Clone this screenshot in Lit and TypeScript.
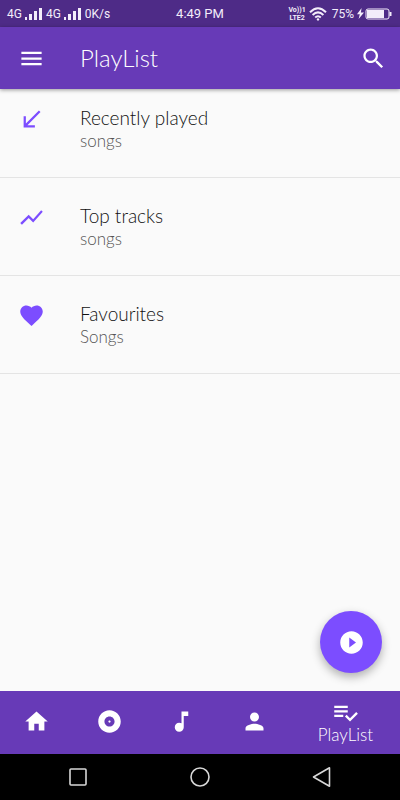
import { LitElement, html, svg, css } from "lit";
import { customElement, property } from "lit/decorators.js";

const ICONS: Record<string, string> = {
  menu: "M3 18h18v-2H3v2zm0-5h18v-2H3v2zm0-7v2h18V6H3z",
  search:
    "M15.5 14h-.79l-.28-.27C15.41 12.59 16 11.11 16 9.5 16 5.91 13.09 3 9.5 3S3 5.91 3 9.5 5.91 16 9.5 16c1.61 0 3.09-.59 4.23-1.57l.27.28v.79l5 4.99L20.49 19l-4.99-5zm-6 0C7.01 14 5 11.99 5 9.5S7.01 5 9.5 5 14 7.01 14 9.5 11.99 14 9.5 14z",
  received: "M20 5.41L18.59 4 7 15.59V9H5v10h10v-2H8.41z",
  chart: "M3.5 18.49l6-6.01 4 4L22 6.92l-1.41-1.41-7.09 7.97-4-4L2 16.99z",
  heart:
    "M12 21.35l-1.45-1.32C5.4 15.36 2 12.28 2 8.5 2 5.42 4.42 3 7.5 3c1.74 0 3.41.81 4.5 2.09C13.09 3.81 14.76 3 16.5 3 19.58 3 22 5.42 22 8.5c0 3.78-3.4 6.86-8.55 11.54L12 21.35z",
  play: "M12 2C6.48 2 2 6.48 2 12s4.48 10 10 10 10-4.48 10-10S17.52 2 12 2zm-2 14.5v-9l6 4.5-6 4.5z",
  home: "M10 20v-6h4v6h5v-8h3L12 3 2 12h3v8z",
  album:
    "M12 2C6.48 2 2 6.48 2 12s4.48 10 10 10 10-4.48 10-10S17.52 2 12 2zm0 14.5c-2.49 0-4.5-2.01-4.5-4.5S9.51 7.5 12 7.5s4.5 2.01 4.5 4.5-2.01 4.5-4.5 4.5zm0-5.5c-.55 0-1 .45-1 1s.45 1 1 1 1-.45 1-1-.45-1-1-1z",
  note: "M12 3v10.55c-.59-.34-1.27-.55-2-.55-2.21 0-4 1.79-4 4s1.79 4 4 4 4-1.79 4-4V7h4V3h-6z",
  person:
    "M12 12c2.21 0 4-1.79 4-4s-1.79-4-4-4-4 1.79-4 4 1.79 4 4 4zm0 2c-2.67 0-8 1.34-8 4v2h16v-2c0-2.66-5.33-4-8-4z",
  playlist:
    "M14 10H2v2h12v-2zm0-4H2v2h12V6zM2 16h8v-2H2v2zm19.5-4.5L23 13l-6.99 7-4.51-4.5L13 14l3.01 3 5.49-5.5z",
};

@customElement("md-icon")
export class MdIcon extends LitElement {
  @property() name = "";

  static styles = css`
    :host {
      display: block;
      flex: none;
      width: 27px;
      height: 27px;
    }
    .glyph {
      display: block;
      width: 100%;
      height: 100%;
      fill: currentColor;
    }
  `;

  render() {
    return html`<svg class="glyph" viewBox="0 0 24 24" aria-hidden="true">
      ${svg`<path d=${ICONS[this.name] ?? ""}></path>`}
    </svg>`;
  }
}

@customElement("status-bar")
export class StatusBar extends LitElement {
  static styles = css`
    :host {
      display: grid;
      grid-template-columns: 1fr auto 1fr;
      align-items: center;
      height: 27px;
      padding: 0 7px;
      background: #4e2b87;
      color: #f3edfa;
      font: 12px/16px Roboto, "Liberation Sans", sans-serif;
    }
    .side {
      display: flex;
      align-items: center;
      gap: 3px;
    }
    .end {
      justify-content: flex-end;
    }
    .clock {
      font-size: 13px;
    }
    .volte {
      display: grid;
      font-size: 7px;
      line-height: 8px;
      font-weight: 700;
      text-align: center;
    }
    .icon {
      display: block;
      flex: none;
    }
    .wifi {
      margin-right: 2px;
    }
    .power {
      display: flex;
      align-items: center;
      gap: 1px;
    }
  `;

  private signal() {
    return html`<svg class="icon" width="18" height="14" viewBox="0 0 18 14" fill="currentColor" aria-hidden="true">
      <path d="M0 10h2v3H0zM4 7h3v6H4zM9 4h3v9H9zM14 1h3v12h-3z"></path>
    </svg>`;
  }

  render() {
    return html`
      <div class="side">
        <span class="network">4G</span>${this.signal()}
        <span class="network">4G</span>${this.signal()}
        <span>0K/s</span>
      </div>
      <span class="clock">4:49 PM</span>
      <div class="side end">
        <span class="volte"><span>Vo))1</span><span>LTE2</span></span>
        <svg class="icon wifi" width="18" height="14" viewBox="0 0 18 14" fill="none" stroke="currentColor" stroke-width="2" aria-hidden="true">
          <path d="M1 5.2Q9-2.6 17 5.2M3.6 8Q9 2.8 14.4 8M6.2 10.6Q9 8 11.8 10.6"></path>
          <circle cx="9" cy="12.4" r="1.2" fill="currentColor" stroke="none"></circle>
        </svg>
        <span>75%</span>
        <span class="power">
          <svg class="icon" width="7" height="11" viewBox="0 0 7 11" fill="currentColor" aria-hidden="true">
            <path d="M4.6 0L0 6.2h2.8L1.6 11 7 4.4H3.9z"></path>
          </svg>
          <svg class="icon" width="28" height="12" viewBox="0 0 28 12" aria-hidden="true">
            <rect x="1" y="1" width="23" height="10" rx="2" fill="none" stroke="currentColor"></rect>
            <rect x="2" y="2" width="17" height="8" fill="currentColor"></rect>
            <path d="M25.5 4v4" stroke="currentColor" stroke-width="2"></path>
          </svg>
        </span>
      </div>
    `;
  }
}

@customElement("app-root")
export class AppRoot extends LitElement {
  static styles = css`
    :host {
      display: flex;
      flex-direction: column;
      min-height: 100vh;
      background: #fafafa;
      color: #111;
      font-family: Lato, "Open Sans", sans-serif;
      font-weight: 300;
    }
    button {
      border: 0;
      padding: 0;
      background: none;
      color: inherit;
      font: inherit;
      cursor: pointer;
    }
    .app-bar {
      display: flex;
      align-items: center;
      height: 62px;
      padding: 0 13px 0 18px;
      background: #673ab7;
      color: #fff;
      box-shadow: 0 1px 4px rgba(0, 0, 0, 0.4);
      z-index: 1;
    }
    .title {
      flex: 1;
      margin: 0 0 0 35px;
      font-size: 24px;
      line-height: 28px;
      font-weight: 300;
    }
    .content {
      position: relative;
      flex: 1;
    }
    .list {
      margin: -9px 0 0;
      padding: 0;
      list-style: none;
    }
    .row {
      display: flex;
      align-items: flex-start;
      gap: 35px;
      box-sizing: border-box;
      width: 100%;
      height: 98px;
      padding: 26px 18px;
      border-bottom: 1px solid #e4e4e4;
      text-align: left;
    }
    .row md-icon {
      color: #7c4dff;
    }
    .text {
      display: grid;
    }
    .name {
      font-size: 19px;
      line-height: 24px;
    }
    .detail {
      font-size: 17px;
      line-height: 22px;
      color: #555;
    }
    .fab {
      position: absolute;
      right: 18px;
      bottom: 18px;
      display: grid;
      place-items: center;
      width: 62px;
      height: 62px;
      border-radius: 50%;
      background: #7c4dff;
      color: #fff;
      box-shadow: 0 4px 10px rgba(0, 0, 0, 0.3);
    }
    .tabs {
      display: grid;
      grid-template-columns: repeat(4, 2fr) 3fr;
      height: 63px;
      background: #673ab7;
      color: #fff;
    }
    .tab {
      display: flex;
      flex-direction: column;
      align-items: center;
      justify-content: center;
      padding-bottom: 2px;
    }
    .tab-label {
      font-size: 17px;
      line-height: 18px;
    }
    .system {
      display: grid;
      grid-template-columns: repeat(3, 1fr);
      height: 46px;
      padding: 0 17px;
      background: #000;
      color: #d8d8d8;
    }
    .key {
      display: grid;
      place-items: center;
    }
    .key-icon {
      display: block;
      fill: none;
      stroke: currentColor;
      stroke-width: 1.6;
      stroke-linejoin: round;
    }
  `;

  private rows = [
    { icon: "received", name: "Recently played", detail: "songs" },
    { icon: "chart", name: "Top tracks", detail: "songs" },
    { icon: "heart", name: "Favourites", detail: "Songs" },
  ];

  private tabs = [
    { icon: "home", title: "Home" },
    { icon: "album", title: "Albums" },
    { icon: "note", title: "Songs" },
    { icon: "person", title: "Artists" },
    { icon: "playlist", title: "PlayList", active: true },
  ];

  private keys = [
    { title: "Recent apps", shape: svg`<rect x="3" y="3" width="16" height="16" rx="1"></rect>` },
    { title: "Home screen", shape: svg`<circle cx="11" cy="11" r="9"></circle>` },
    { title: "Back", shape: svg`<path d="M2.5 11L18.5 1.8V20.2z"></path>` },
  ];

  render() {
    return html`
      <status-bar></status-bar>
      <header class="app-bar">
        <button aria-label="Menu"><md-icon name="menu"></md-icon></button>
        <h1 class="title">PlayList</h1>
        <button aria-label="Search"><md-icon name="search"></md-icon></button>
      </header>
      <main class="content">
        <ul class="list">
          ${this.rows.map(
            (r) => html`<li>
              <button class="row">
                <md-icon name=${r.icon}></md-icon>
                <span class="text">
                  <span class="name">${r.name}</span>
                  <span class="detail">${r.detail}</span>
                </span>
              </button>
            </li>`
          )}
        </ul>
        <button class="fab" aria-label="Play"><md-icon name="play"></md-icon></button>
      </main>
      <nav class="tabs">
        ${this.tabs.map(
          (t) => html`<button class="tab" aria-label=${t.title}>
            <md-icon name=${t.icon}></md-icon>
            ${t.active ? html`<span class="tab-label">${t.title}</span>` : ""}
          </button>`
        )}
      </nav>
      <div class="system">
        ${this.keys.map(
          (k) => html`<button class="key" aria-label=${k.title}>
            <svg class="key-icon" width="22" height="22" viewBox="0 0 22 22">${k.shape}</svg>
          </button>`
        )}
      </div>
    `;
  }
}
